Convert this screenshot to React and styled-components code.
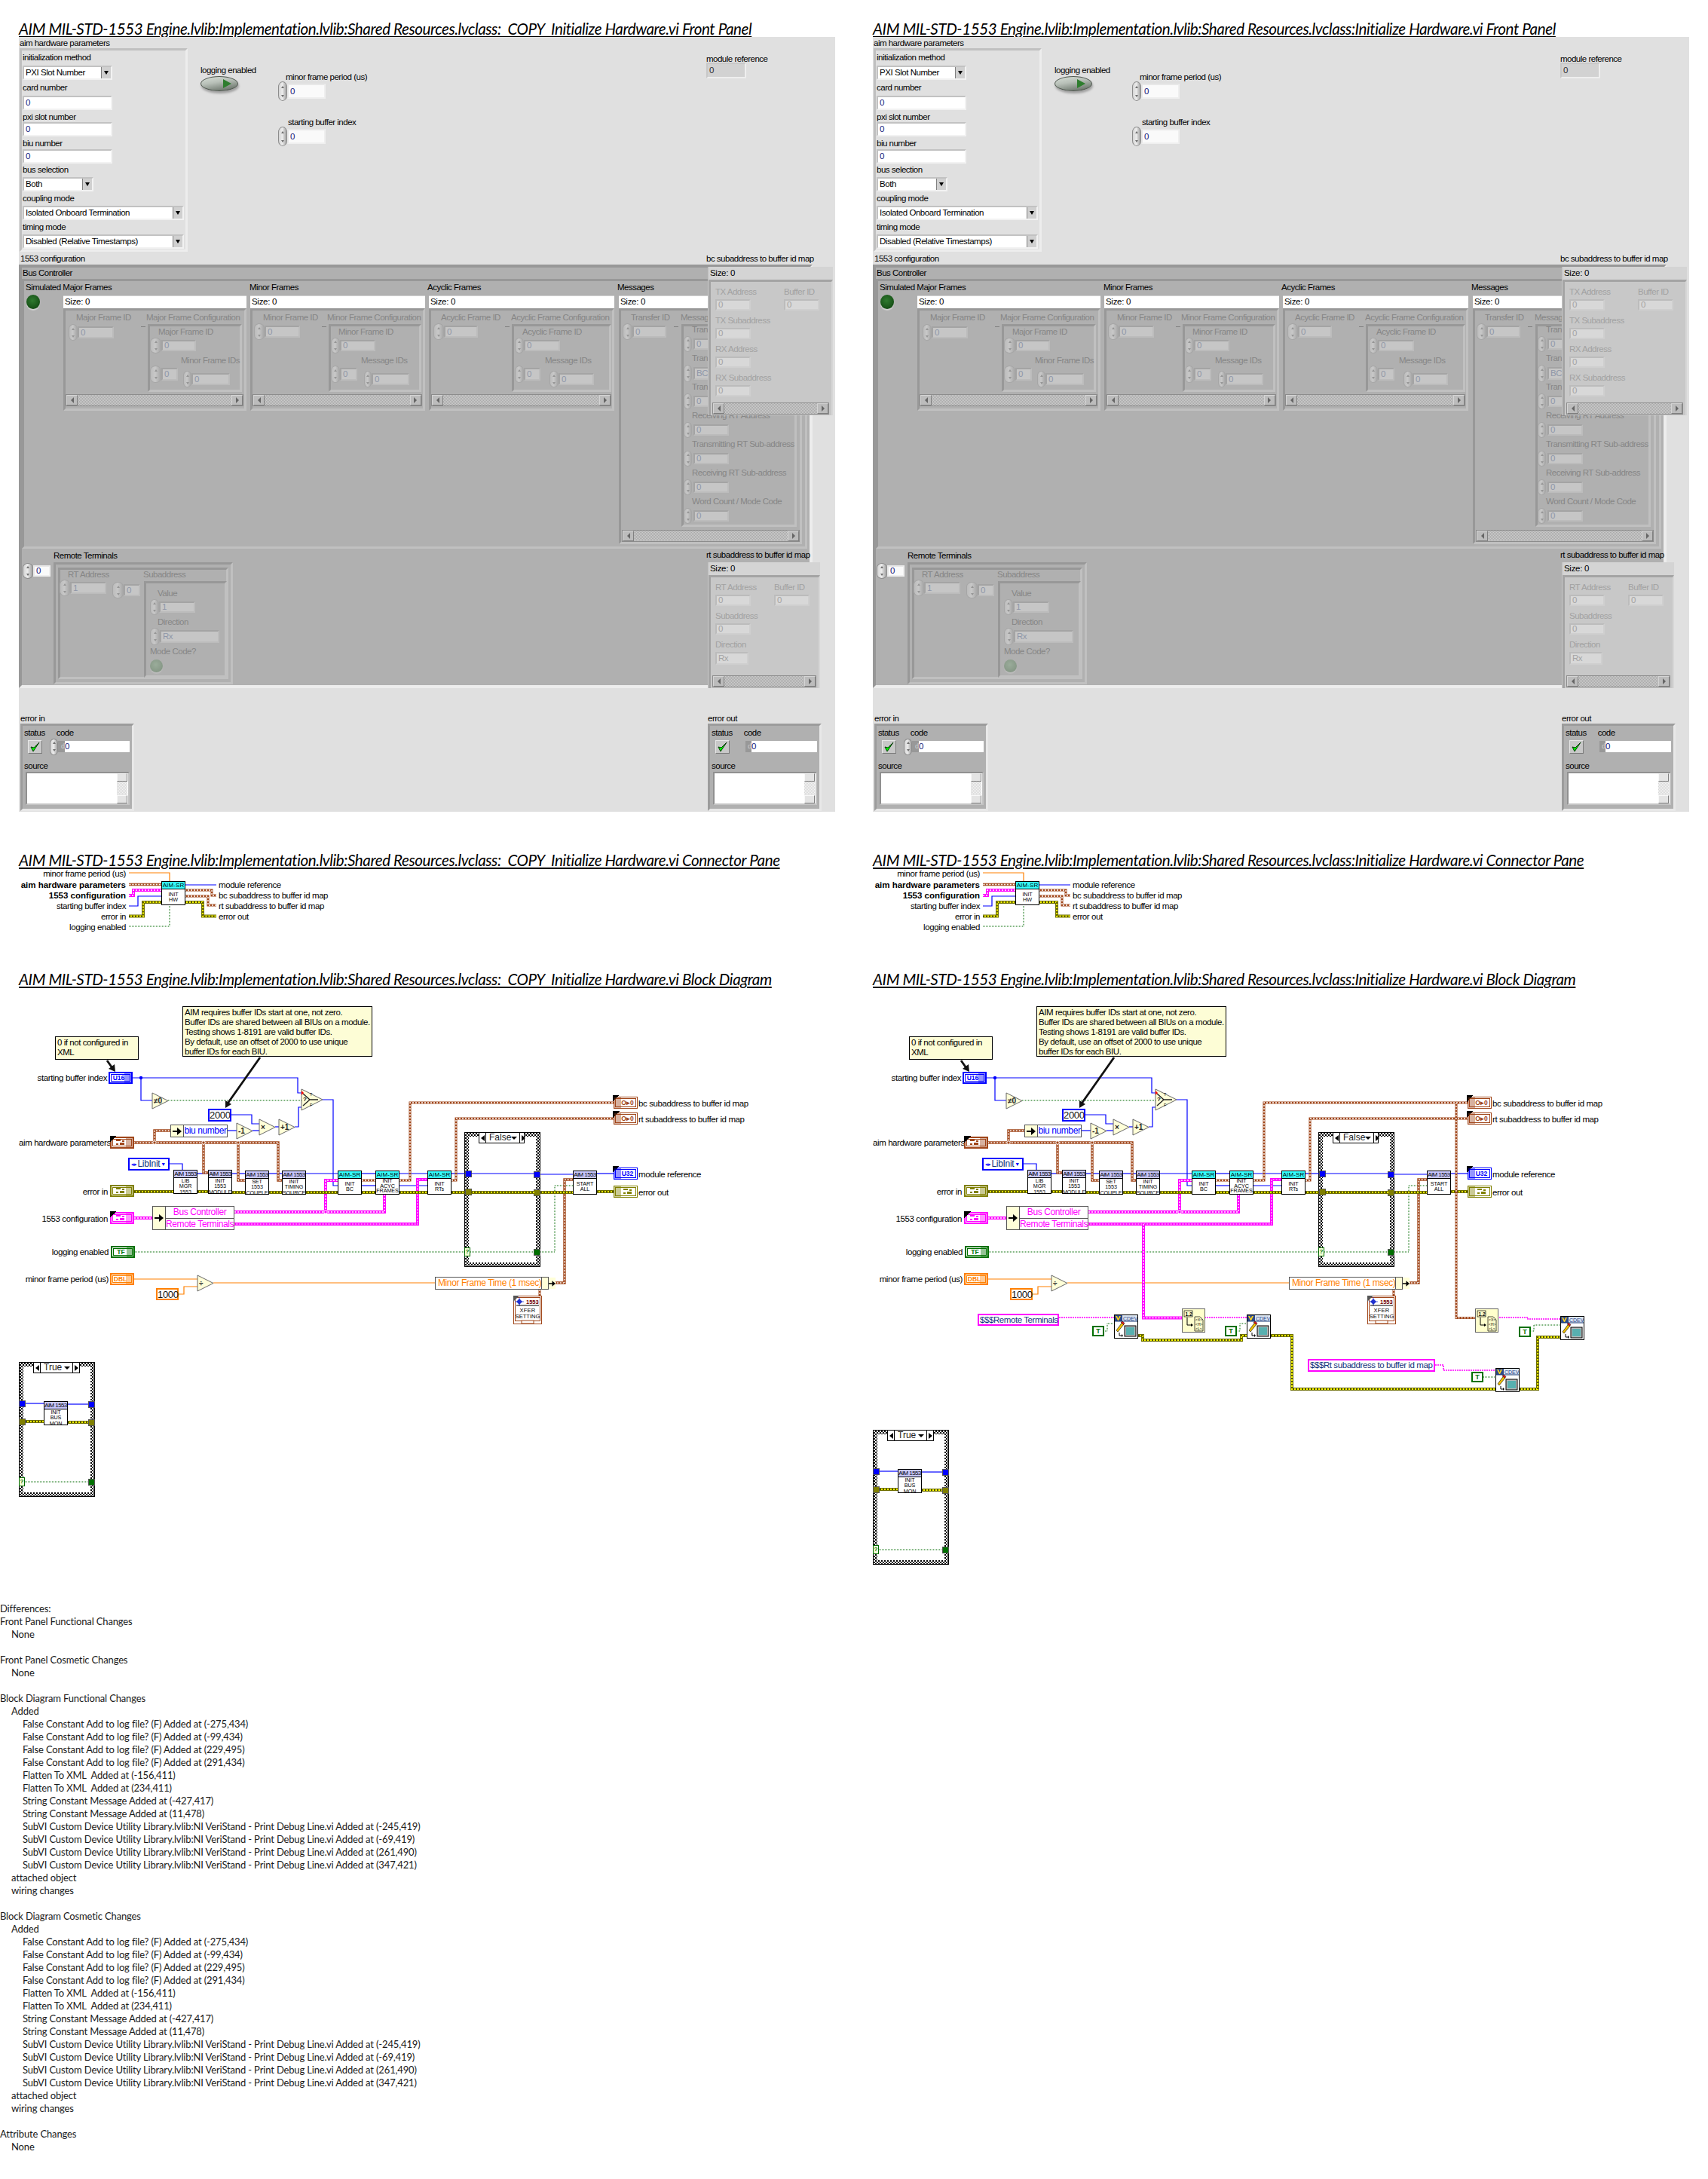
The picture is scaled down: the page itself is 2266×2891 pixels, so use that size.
import React from 'react'
import styled, { createGlobalStyle, css } from 'styled-components'

const GlobalStyle = createGlobalStyle`
  html, body { margin: 0; padding: 0; background: #fff; }
  body { font-family: 'Liberation Sans', sans-serif; color: #000; }
`

// canvases take page coordinates of the left column, so numbers read off the picture stay usable
const onCanvas = originY => css`
  position: absolute;
  box-sizing: border-box;
  left: ${p => p.$x - 25}px;
  top: ${p => p.$y - originY}px;
  ${p => (p.$w != null ? `width: ${p.$w}px;` : '')}
  ${p => (p.$h != null ? `height: ${p.$h}px;` : '')}
`
const FP = styled.div`${onCanvas(49)}`
const CP = styled.div`${onCanvas(1152)}`
const BD = styled.div`${onCanvas(1310)}`

const Page = styled.div`
  width: 2266px;
  min-height: 2891px;
  overflow: hidden;
`
const Columns = styled.div`
  display: grid;
  grid-template-columns: 1133px 1133px;
`
const Column = styled.section`
  padding-left: 25px;
  display: flex;
  flex-direction: column;
`
const Title = styled.h2`
  margin: ${p => p.$top}px 0 0;
  height: 22px;
  font: italic 400 20.6px/22px Lato, sans-serif;
  letter-spacing: -0.42px;
  text-decoration: underline;
  text-decoration-thickness: 2px;
  text-underline-offset: 2px;
  white-space: pre;
  color: #000;
`

/* ---------- front panel parts ---------- */

const Panel = styled.div`
  position: relative;
  width: 1083px;
  height: 1028px;
  background: #e0e0e0;
  overflow: hidden;
`
const Lbl = styled.div`
  font-size: 11.5px;
  line-height: 12px;
  height: 12px;
  white-space: nowrap;
  letter-spacing: -0.5px;
  color: ${p => (p.$dim ? '#868686' : p.$veil ? '#a2a2a2' : '#000')};
  margin-left: ${p => p.$ml || 0}px;
`
const TONE = {
  live: { bg: '#fff', tl: '#c2c2c2', br: '#f2f2f2', txt: '#13207c' },
  flat: { bg: '#fafafa', tl: '#e8e8e8', br: '#efefef', txt: '#13207c' },
  ind: { bg: '#d2d2d2', tl: '#c8c8c8', br: '#eeeeee', txt: '#333' },
  dim: { bg: '#c6c6c6', tl: '#a4a4a4', br: '#bcbcbc', txt: '#8f96a8' },
  veil: { bg: '#d8d8d8', tl: '#bcbcbc', br: '#cfcfcf', txt: '#a4a4a4' },
}
const Field = styled.div`
  box-sizing: border-box;
  flex: none;
  width: ${p => p.$w}px;
  height: ${p => p.$h}px;
  margin-top: ${p => p.$mt || 0}px;
  padding-left: 2px;
  background: ${p => TONE[p.$tone].bg};
  border: 2px solid;
  border-color: ${p => `${TONE[p.$tone].tl} ${TONE[p.$tone].br} ${TONE[p.$tone].br} ${TONE[p.$tone].tl}`};
  color: ${p => TONE[p.$tone].txt};
  font-size: 11.5px;
  letter-spacing: -0.45px;
  line-height: ${p => p.$h - 4}px;
  white-space: nowrap;
  overflow: hidden;
`
const Spin = styled.div`
  flex: none;
  box-sizing: border-box;
  width: ${p => p.$w}px;
  height: ${p => p.$h}px;
  border-radius: 50% / 28%;
  border: 1px solid ${p => (p.$faint ? '#a6a6a6' : '#8c8c8c')};
  background: ${p =>
    p.$faint ? 'linear-gradient(90deg,#bcbcbc,#c8c8c8 45%,#a8a8a8)' : 'linear-gradient(90deg,#d4d4d4,#ececec 45%,#a2a2a2)'};
  display: flex;
  flex-direction: column;
  align-items: center;
  justify-content: space-around;
  &::before, &::after {
    content: '';
    border-left: 2px solid transparent;
    border-right: 2px solid transparent;
  }
  &::before { border-bottom: 3px solid ${p => (p.$faint ? '#969696' : '#707070')}; }
  &::after { border-top: 3px solid ${p => (p.$faint ? '#969696' : '#707070')}; }
`
const NumRow = styled.div`
  display: flex;
  align-items: center;
`
const Num = ({ x, y, spin = 12, w, h = 16, v = '0', tone = 'dim' }) => (
  <FP $x={x} $y={y - 3}>
    <NumRow>
      {spin ? <Spin $w={spin} $h={h + 6} $faint={tone !== 'live' && tone !== 'flat'} /> : null}
      <Field $w={w} $h={h} $tone={tone}>{v}</Field>
    </NumRow>
  </FP>
)
const FpLabel = ({ x, y, dim, children }) => (
  <FP $x={x} $y={y - 6}><Lbl $dim={dim}>{children}</Lbl></FP>
)

// the recessed frame every LabVIEW cluster or array sits in
const Frame = styled(FP)`
  background: ${p => p.$bg};
  border: ${p => p.$bw || 3}px solid;
  border-color: ${p => `${p.$tl} ${p.$br} ${p.$br} ${p.$tl}`};
`
const ON_DARK = { $bg: '#b0b0b0', $tl: '#989898', $br: '#c0c0c0' }
const ON_LIGHT = { $bg: '#e0e0e0', $tl: '#c0c0c0', $br: '#ededed' }

const AimCluster = styled(Frame)`
  display: flex;
  flex-direction: column;
  padding: 3px 0 0 1px;
`
const AimLabel = styled(Lbl)`
  margin-top: ${p => p.$top}px;
`
const RingBox = styled(Field)`
  position: relative;
  background: #fff;
  color: #000;
`
const RingBtn = styled.span`
  position: absolute;
  top: 0;
  right: 0;
  bottom: 0;
  width: 12px;
  background: #d0d0d0;
  border-left: 1px solid #808080;
  display: flex;
  align-items: center;
  justify-content: center;
  &::after {
    content: '';
    border-left: 3px solid transparent;
    border-right: 3px solid transparent;
    border-top: 5px solid #000;
  }
`
const Ring = ({ w, mt, children }) => (
  <RingBox $w={w} $h={19} $mt={mt} $tone="live">{children}<RingBtn /></RingBox>
)
const AimNumber = ({ label, top, mt }) => (
  <>
    <AimLabel $top={top}>{label}</AimLabel>
    <Field $w={119} $h={19} $mt={mt} $tone="live">0</Field>
  </>
)

const Toggle = styled(FP)`
  border-radius: 50%;
  background: linear-gradient(170deg, #d8e0d8, #b8c0b8 40%, #5c665c);
  box-shadow: 1px 3px 3px #a0a0a0;
  border: 1px solid #505850;
  &::after {
    content: '';
    position: absolute;
    right: 8px;
    top: 3px;
    border-left: 11px solid #2e7d2e;
    border-top: 6px solid transparent;
    border-bottom: 6px solid transparent;
  }
`
const Led = styled(FP)`
  border-radius: 50%;
  background: radial-gradient(circle at 45% 40%, ${p => (p.$faint ? '#9aac9a, #7f907f' : '#2f7a2f, #0c3f0c')});
  box-shadow: 0 2px 1px ${p => (p.$faint ? '#bcbcbc' : '#d0d0d0')};
`
const SizeBar = styled(FP)`
  background: #fff;
  border-top: 1px solid #d0d0d0;
  font-size: 11.5px;
  letter-spacing: -0.3px;
  line-height: 15px;
  padding-left: 2px;
`
const Scroll = styled.div`
  box-sizing: border-box;
  display: flex;
  height: 16px;
  border: 1px solid #8c8c8c;
  background: repeating-conic-gradient(#a8a8a8 0 25%, #cdcdcd 0 50%) 0 0 / 2px 2px;
`
const ScrollBtn = styled.span`
  flex: none;
  width: 13px;
  background: #bcbcbc;
  border: 1px solid #d4d4d4;
  border-right-color: #808080;
  border-bottom-color: #808080;
  display: flex;
  align-items: center;
  justify-content: center;
  margin-left: ${p => (p.$end ? 'auto' : 0)};
  &::after {
    content: '';
    border-top: 4px solid transparent;
    border-bottom: 4px solid transparent;
    ${p => (p.$end ? 'border-left: 4px solid #666;' : 'border-right: 4px solid #666;')}
  }
`
const HScroll = () => (
  <Scroll>
    <ScrollBtn />
    <ScrollBtn $end />
  </Scroll>
)
const Tick = styled(FP)`
  width: 6px;
  height: 1px;
  background: #808080;
`

const ARRAYS = [
  {
    title: 'Simulated Major Frames', size: [84, 243], id: ['Major Frame ID', 101], cfg: ['Major Frame Configuration', 194],
    spin: 91, field: [103, 48], fy: 433, sub: [196, 125], inner: ['Major Frame ID', 210], in: [199, 214, 46],
    list: ['Minor Frame IDs', 240], idx: 22, el: [243, 254, 51],
  },
  {
    title: 'Minor Frames', size: [332, 231.5], id: ['Minor Frame ID', 349], cfg: ['Minor Frame Configuration', 434],
    spin: 337, field: [351, 47], fy: 432, sub: [436, 123], inner: ['Minor Frame ID', 449], in: [439, 451, 47],
    list: ['Message IDs', 479], idx: 23, el: [483, 493, 50],
  },
  {
    title: 'Acyclic Frames', size: [569, 246], id: ['Acyclic Frame ID', 585], cfg: ['Acyclic Frame Configuration', 678],
    spin: 575, field: [589, 45], fy: 432, sub: [679, 132], inner: ['Acyclic Frame ID', 693], in: [683, 695, 48],
    list: ['Message IDs', 723], idx: 22, el: [729, 741, 47],
  },
]

const FrameArray = ({ a }) => {
  const [sx, sw] = a.size
  return (
    <>
      <SizeBar $x={sx} $y={392} $w={sw} $h={17}>Size: 0</SizeBar>
      <Frame {...ON_DARK} $x={sx} $y={409} $w={sw} $h={136} />
      <FpLabel x={a.id[1]} y={421} dim>{a.id[0]}</FpLabel>
      <FpLabel x={a.cfg[1]} y={421} dim>{a.cfg[0]}</FpLabel>
      <Num x={a.spin} y={a.fy} spin={a.field[0] - a.spin} w={a.field[1]} />
      <Tick $x={a.sub[0] - 9} $y={433} />
      <Frame {...ON_DARK} $x={a.sub[0]} $y={430} $w={a.sub[1]} $h={90} />
      <FpLabel x={a.inner[1]} y={440} dim>{a.inner[0]}</FpLabel>
      <Num x={a.in[0]} y={451} spin={a.in[1] - a.in[0]} w={a.in[2]} h={15} />
      <FpLabel x={a.list[1]} y={478} dim>{a.list[0]}</FpLabel>
      <Num x={a.in[0]} y={488} spin={a.in[1] - a.in[0]} w={a.idx} h={17} />
      <Num x={a.el[0]} y={495} spin={a.el[1] - a.el[0]} w={a.el[2]} />
      <FP $x={sx + 3} $y={523} $w={sw - 7}><HScroll /></FP>
    </>
  )
}

// the upper labels of this array only show as far as the map lying over them
const MSG_ITEMS = [
  ['Trans', '0', 15],
  ['Trans', 'BC t', 17],
  ['Trans', '0', 15],
  ['Receiving RT Address', '0', 15],
  ['Transmitting RT Sub-address', '0', 15],
  ['Receiving RT Sub-address', '0', 15],
  ['Word Count / Mode Code', '0', 15],
]
const MsgStack = styled(FP)`
  display: flex;
  flex-direction: column;
`
const MsgItem = styled.div`
  height: 38px;
`
const MsgRow = styled(NumRow)`
  margin-top: 3px;
  gap: 2px;
`
const MessagesArray = () => (
  <>
    <SizeBar $x={821} $y={392} $w={240} $h={17}>Size: 0</SizeBar>
    <Frame {...ON_DARK} $x={821} $y={409} $w={243} $h={313} />
    <FpLabel x={837} y={421} dim>Transfer ID</FpLabel>
    <FpLabel x={903} y={421} dim>Messag</FpLabel>
    <Num x={826} y={432} spin={13} w={45} />
    <Tick $x={894} $y={433} />
    <Frame {...ON_DARK} $x={904} $y={430} $w={153} $h={269} />
    <MsgStack $x={907} $y={431}>
      {MSG_ITEMS.map(([label, v, h], i) => (
        <MsgItem key={i}>
          <Lbl $dim $ml={11}>{label}</Lbl>
          <MsgRow>
            <Spin $w={11} $h={h + 6} $faint />
            <Field $w={47} $h={h} $tone="dim">{v}</Field>
          </MsgRow>
        </MsgItem>
      ))}
    </MsgStack>
    <FP $x={825} $y={703} $w={236}><HScroll /></FP>
  </>
)

const Overlay = styled(FP)`
  display: flex;
  flex-direction: column;
  background: #c8c8c8;
`
const OverlaySize = styled.div`
  flex: none;
  height: 17px;
  margin-left: 2px;
  background: #d4d4d4;
  font-size: 11.5px;
  letter-spacing: -0.3px;
  line-height: 16px;
  padding-left: 1px;
`
const OverlayFrame = styled.div`
  flex: 1;
  min-height: 0;
  display: flex;
  flex-direction: column;
  margin-left: 1px;
  padding: 0 3px 1px 2px;
  border-top: 3px solid #a4a4a4;
  border-left: 3px solid #a4a4a4;
  border-right: 2px solid #d6d6d6;
`
const OverlayCols = styled.div`
  flex: 1;
  display: flex;
  padding-top: 7px;
`
const OverlayCol = styled.div`
  width: ${p => p.$w}px;
  flex: none;
`
const VeilItem = styled.div`
  height: 38px;
`
const VeilField = ({ label, v = '0', w = 47, h = 15 }) => (
  <VeilItem>
    <Lbl $veil>{label}</Lbl>
    <Field $w={w} $h={h} $mt={4} $tone="veil">{v}</Field>
  </VeilItem>
)
const VeilIndent = styled.div`
  padding-left: 4px;
`

const ErrorBox = styled(Frame)`
  padding: 3px 3px 0 1px;
  display: flex;
  flex-direction: column;
`
const ErrHead = styled.div`
  display: flex;
  height: 14px;
`
const ErrRow = styled.div`
  display: flex;
  align-items: center;
  height: 21px;
  margin-bottom: 9px;
`
const CheckBtn = styled.div`
  width: 19px;
  height: 18px;
  margin-left: 6px;
  box-sizing: border-box;
  background: #c8c8c8;
  border: 1px solid #e8e8e8;
  border-right-color: #7c7c7c;
  border-bottom-color: #7c7c7c;
  display: flex;
  align-items: center;
  justify-content: center;
`
const SpinGap = styled.div`
  margin-left: 10px;
`
const CodeTagGap = styled.div`
  width: 21px;
`
const CodeTag = styled.div`
  width: ${p => p.$w}px;
  height: 15px;
  background: #989898;
  color: #d0d0d0;
  font-size: 9px;
  line-height: 15px;
  text-align: right;
`
const CodeField = styled.div`
  flex: 1;
  height: 15px;
  background: #fff;
  color: #13207c;
  font-size: 11.5px;
  line-height: 15px;
`
const SourceBox = styled.div`
  flex: 1;
  margin: 2px 0 5px 3px;
  background: #fff;
  border: 2px solid;
  border-color: #909090 #c4c4c4 #c4c4c4 #909090;
  display: flex;
  justify-content: flex-end;
`
const VScroll = styled.div`
  width: 14px;
  margin-right: 1px;
  display: flex;
  flex-direction: column;
  justify-content: space-between;
  background: repeating-conic-gradient(#d8d8d8 0 25%, #f4f4f4 0 50%) 0 0 / 2px 2px;
`
const VBtn = styled.span`
  height: 9px;
  background: #e4e4e4;
  border: 1px solid #f8f8f8;
  border-right-color: #808080;
  border-bottom-color: #808080;
`
const ErrorCluster = ({ x, title, out }) => (
  <>
    <FpLabel x={x} y={953}>{title}</FpLabel>
    <ErrorBox {...ON_DARK} $tl="#9c9c9c" $br="#e8e8e8" $x={x} $y={960} $w={151} $h={116}>
      <ErrHead>
        <Lbl $ml={1}>status</Lbl>
        <Lbl $ml={15}>code</Lbl>
      </ErrHead>
      <ErrRow>
        <CheckBtn>
          <svg width="13" height="14" viewBox="0 0 13 14"><path d="M1 7l3 6 8-12-7 7z" fill="#00ff00" stroke="#003800" strokeWidth="1" /></svg>
        </CheckBtn>
        {out ? <CodeTagGap /> : <SpinGap><Spin $w={11} $h={22} /></SpinGap>}
        <CodeTag $w={out ? 8 : 9}>d</CodeTag>
        <CodeField>0</CodeField>
      </ErrRow>
      <Lbl $ml={1}>source</Lbl>
      <SourceBox>
        <VScroll><VBtn /><VBtn /></VScroll>
      </SourceBox>
    </ErrorBox>
  </>
)

const FrontPanel = () => (
  <Panel>
    <FpLabel x={26} y={57}>aim hardware parameters</FpLabel>
    <AimCluster {...ON_LIGHT} $x={26} $y={64} $w={223} $h={270}>
      <Lbl>initialization method</Lbl>
      <Ring w={119} mt={5}>PXI Slot Number</Ring>
      <AimNumber label="card number" top={4} mt={5} />
      <AimNumber label="pxi slot number" top={3} mt={1} />
      <AimNumber label="biu number" top={3} mt={2} />
      <AimLabel $top={2}>bus selection</AimLabel>
      <Ring w={94} mt={4}>Both</Ring>
      <AimLabel $top={3}>coupling mode</AimLabel>
      <Ring w={214} mt={4}>Isolated Onboard Termination</Ring>
      <AimLabel $top={3}>timing mode</AimLabel>
      <Ring w={214} mt={4}>Disabled (Relative Timestamps)</Ring>
    </AimCluster>

    <FpLabel x={266} y={93}>logging enabled</FpLabel>
    <Toggle $x={266} $y={101} $w={50} $h={20} />
    <FpLabel x={379} y={102}>minor frame period (us)</FpLabel>
    <Num x={369} y={111} w={51} h={20} tone="flat" />
    <FpLabel x={382} y={162}>starting buffer index</FpLabel>
    <Num x={369} y={171} w={51} h={20} tone="flat" />
    <FpLabel x={937} y={78}>module reference</FpLabel>
    <Num x={937} y={86} spin={0} w={53} h={21} tone="ind" />

    <FpLabel x={27} y={343}>1553 configuration</FpLabel>
    <Frame {...ON_DARK} $br="#ededed" $bw={4} $x={25} $y={351} $w={1053} $h={562} />
    <FpLabel x={30} y={362}>Bus Controller</FpLabel>
    <Frame {...ON_DARK} $x={29} $y={370} $w={1042} $h={358} />
    <FpLabel x={34} y={381}>Simulated Major Frames</FpLabel>
    <FpLabel x={331} y={381}>Minor Frames</FpLabel>
    <FpLabel x={567} y={381}>Acyclic Frames</FpLabel>
    <FpLabel x={819} y={381}>Messages</FpLabel>
    <Led $x={35} $y={391} $w={18} $h={19} />
    {ARRAYS.map(a => <FrameArray key={a.title} a={a} />)}
    <MessagesArray />

    <FpLabel x={71} y={737}>Remote Terminals</FpLabel>
    <Num x={30} y={750} spin={14} w={23} h={15} tone="flat" />
    <Frame {...ON_DARK} $x={71} $y={746} $w={238} $h={162} />
    <Frame {...ON_DARK} $x={77} $y={753} $w={226} $h={148} />
    <FpLabel x={90} y={762} dim>RT Address</FpLabel>
    <FpLabel x={190} y={762} dim>Subaddress</FpLabel>
    <Num x={79} y={772} spin={14} w={48} v="1" />
    <Num x={149} y={775} spin={15} w={22} />
    <Frame {...ON_DARK} $x={191} $y={771} $w={110} $h={128} />
    <FpLabel x={209} y={787} dim>Value</FpLabel>
    <Num x={199} y={798} w={48} spin={12} h={15} v="1" />
    <FpLabel x={209} y={825} dim>Direction</FpLabel>
    <Num x={199} y={836} w={79} spin={13} h={17} v="Rx" />
    <FpLabel x={199} y={864} dim>Mode Code?</FpLabel>
    <Led $faint $x={199} $y={875} $w={17} $h={17} />

    <FpLabel x={937} y={343}>bc subaddress to buffer id map</FpLabel>
    <Overlay $x={939} $y={354} $w={166} $h={197}>
      <OverlaySize>Size: 0</OverlaySize>
      <OverlayFrame>
        <OverlayCols>
          <OverlayCol $w={95}>
            <VeilIndent>
              <VeilField label="TX Address" />
              <VeilField label="TX Subaddress" />
              <VeilField label="RX Address" />
              <VeilField label="RX Subaddress" />
            </VeilIndent>
          </OverlayCol>
          <OverlayCol $w={60}>
            <VeilField label="Buffer ID" />
          </OverlayCol>
        </OverlayCols>
        <HScroll />
      </OverlayFrame>
    </Overlay>

    <FpLabel x={937} y={736}>rt subaddress to buffer id map</FpLabel>
    <Overlay $x={939} $y={746} $w={149} $h={167}>
      <OverlaySize>Size: 0</OverlaySize>
      <OverlayFrame>
        <OverlayCols>
          <OverlayCol $w={82}>
            <VeilIndent>
              <VeilField label="RT Address" />
              <VeilField label="Subaddress" />
              <VeilField label="Direction" w={44} h={17} v="Rx" />
            </VeilIndent>
          </OverlayCol>
          <OverlayCol $w={52}>
            <VeilField label="Buffer ID" />
          </OverlayCol>
        </OverlayCols>
        <HScroll />
      </OverlayFrame>
    </Overlay>

    <ErrorCluster x={27} title="error in" />
    <ErrorCluster x={939} title="error out" out />
  </Panel>
)

/* ---------- diagram parts ---------- */

const Wires = styled.svg`
  position: absolute;
  left: 0;
  top: 0;
  overflow: visible;
  pointer-events: none;
`
const WIRE = {
  blue: [{ c: '#0000ff', w: 1.2 }],
  orange: [{ c: '#ff8000', w: 1.2 }],
  bool: [{ c: '#006a00', w: 1, dash: '1 1' }],
  error: [{ c: '#6f6f00', w: 4 }, { c: '#ffff00', w: 2 }, { c: '#1c1c00', w: 1.4, dash: '2 2' }],
  cluster: [{ c: '#a0461a', w: 3.4 }, { c: '#fff', w: 1.4, dash: '1 1' }],
  pink: [{ c: '#ff00ff', w: 4 }, { c: '#fff', w: 1.4, dash: '2 2' }],
  pinkFine: [{ c: '#ff00ff', w: 4 }, { c: '#fff', w: 1.2, dash: '1 1' }],
  pinkThin: [{ c: '#ff00ff', w: 1.6, dash: '2 1' }],
  meander: [{ c: '#a0461a', w: 3 }, { c: '#fff', w: 1.3, dash: '2 2' }],
}
const Wire = ({ d, kind }) => (
  <g fill="none">
    {WIRE[kind].map((s, i) => (
      <path key={i} d={d} stroke={s.c} strokeWidth={s.w} strokeDasharray={s.dash} />
    ))}
  </g>
)
const wireSet = (kind, list) => list.map(d => <Wire key={kind + d} d={d} kind={kind} />)
const Dot = ({ x, y, c }) => <circle cx={x} cy={y} r="2.2" fill={c} stroke={c === '#0000ff' ? c : '#fff'} strokeWidth={c === '#0000ff' ? 0 : 1} />

const Prim = ({ x, y, w = 21, h = 21, children, size = 10 }) => (
  <g>
    <polygon points={`${x},${y} ${x + w},${y + h / 2} ${x},${y + h}`} fill="#ffffd8" stroke="#666" />
    <text x={x + 2} y={y + h / 2 + size * 0.36} fontFamily="Liberation Sans" fontWeight="700" fontSize={size} fill="#222">{children}</text>
  </g>
)

const DgLabel = styled(BD)`
  font-size: 11.5px;
  line-height: 12px;
  white-space: nowrap;
  letter-spacing: -0.4px;
  ${p => (p.$right ? 'text-align: right;' : '')}
`
const RightLabel = ({ end, y, children }) => (
  <DgLabel $x={25} $w={end - 25} $y={y - 6} $right>{children}</DgLabel>
)

const Note = styled(BD)`
  background: #fdfdd6;
  border: 1px solid #000;
  font-size: 11.5px;
  letter-spacing: -0.44px;
  line-height: 13px;
  padding: 1px 0 0 2px;
  white-space: pre;
`

const TermBox = styled(BD)`
  width: 32px;
  height: 16px;
  background: #fff;
  border: ${p => (p.$thin ? 1 : 2)}px solid ${p => p.$c};
  padding: 1px;
  display: flex;
  ${p => p.$corner && css`
    &::before {
      content: '';
      position: absolute;
      left: -2px;
      top: -3px;
      width: 9px;
      height: 9px;
      background: linear-gradient(135deg, #000 50%, transparent 50%);
    }
  `}
`
const TermInner = styled.div`
  flex: 1;
  border: 1px solid ${p => p.$c};
  color: ${p => p.$c};
  font-size: 8.5px;
  font-weight: 700;
  line-height: 9px;
  text-align: center;
  display: flex;
  align-items: center;
  justify-content: center;
  padding-${p => (p.$out ? 'left' : 'right')}: 5px;
`
const TermTint = styled.span`
  position: absolute;
  top: 0;
  bottom: 0;
  ${p => (p.$out ? 'left: 0' : 'right: 0')};
  width: 9px;
  background: ${p => p.$c};
  opacity: 0.42;
`
const ClusterGlyph = ({ c }) => (
  <svg width="14" height="8" viewBox="0 0 14 8">
    <rect x="1" y="0" width="6" height="2" fill={c} />
    <rect x="9" y="1" width="3" height="2" fill={c} />
    <rect x="1" y="5" width="3" height="2" fill={c} />
    <rect x="6" y="4" width="6" height="3" fill={c} />
  </svg>
)
const Terminal = ({ x, y, c, text, glyph, corner, out, thin }) => (
  <TermBox $x={x} $y={y} $c={c} $corner={corner} $thin={thin}>
    <TermInner $c={c} $out={out}>{glyph ? <ClusterGlyph c={c} /> : text}</TermInner>
    <TermTint $c={c} $out={out} />
  </TermBox>
)

const NodeBox = styled(BD)`
  width: ${p => p.$w || 32}px;
  height: 32px;
  background: #fff;
  border: 1px solid #000;
  display: flex;
  flex-direction: column;
`
const NodeHead = styled.div`
  flex: none;
  height: 9px;
  background: ${p => (p.$sr ? '#33ffff' : '#c8c8ff')};
  border-bottom: 1px solid #000;
  font-size: 8px;
  line-height: 9px;
  text-align: center;
  white-space: nowrap;
  letter-spacing: ${p => (p.$sr ? 0.1 : -0.6)}px;
`
const NodeBody = styled.div`
  flex: 1;
  display: flex;
  flex-direction: column;
  align-items: center;
  justify-content: center;
  font-size: 7.2px;
  line-height: ${p => (p.$tight ? 6.4 : 7.4)}px;
  letter-spacing: -0.1px;
  white-space: nowrap;
`
const SubVI = ({ x, y, sr, lines, w, tight }) => (
  <NodeBox $x={x} $y={y} $w={w}>
    <NodeHead $sr={sr}>{sr ? 'AIM-SR' : 'AIM 1553'}</NodeHead>
    <NodeBody $tight={tight}>{lines.map(l => <span key={l}>{l}</span>)}</NodeBody>
  </NodeBox>
)

const Constant = styled(BD)`
  border: 2px solid ${p => p.$c};
  background: #fff;
  font-size: 13px;
  letter-spacing: -0.3px;
  text-align: center;
  line-height: 13px;
  white-space: nowrap;
  color: ${p => p.$text || '#111'};
`
const TextConstant = styled(Constant)`
  text-align: left;
  font-size: 11.5px;
  letter-spacing: -0.42px;
  padding-left: 1px;
  line-height: 12px;
  color: #12327c;
`
const BoolConst = styled(BD)`
  width: 16px;
  height: 14px;
  background: #007000;
  padding: 2px;
  display: flex;
  &::after {
    content: 'T';
    flex: 1;
    background: #fff;
    color: #007000;
    font: 700 9px/10px 'Liberation Sans', sans-serif;
    text-align: center;
  }
`
const LibRing = styled(BD)`
  border: 2px solid #0000ff;
  background: #fff;
  font-size: 12px;
  letter-spacing: -0.3px;
  line-height: 13px;
  display: flex;
  align-items: center;
  justify-content: space-between;
  padding: 0 3px 0 2px;
  color: #12327c;
`
const Blue = styled.span`
  color: #0000ff;
  font-size: 7px;
`

const BlockArrow = () => (
  <svg width="12" height="10" viewBox="0 0 12 10">
    <path d="M0 4h6V0l6 5-6 5V6H0z" fill="#000" />
  </svg>
)
const Unbundle = styled(BD)`
  display: flex;
  border: 1px solid #555;
  background: #fff;
`
const UnbundleGrip = styled.div`
  flex: none;
  width: ${p => p.$w}px;
  background: #ffffd8;
  border-right: 1px solid #555;
  display: flex;
  align-items: center;
  justify-content: center;
`
const UnbundleRows = styled.div`
  flex: 1;
  display: flex;
  flex-direction: column;
`
const UnbundleRow = styled.div`
  flex: 1;
  color: ${p => p.$c};
  font-size: 12px;
  letter-spacing: -0.4px;
  line-height: 15px;
  text-align: center;
  white-space: nowrap;
  & + & { border-top: 1px solid #555; }
`
const BundleCell = styled.div`
  flex: none;
  width: ${p => p.$w}px;
  background: #ffffd8;
  border-left: 1px solid #555;
  display: flex;
  align-items: center;
  justify-content: center;
`
const BundleText = styled.div`
  flex: 1;
  color: #ff8000;
  font-size: 12px;
  letter-spacing: -0.4px;
  line-height: 15px;
  padding-left: 3px;
  white-space: nowrap;
`

const CaseFrame = styled(BD)`
  border: 1px solid #000;
  padding: 5px;
  background: repeating-conic-gradient(#000 0 25%, #fff 0 50%) 0 0 / 4px 4px;
`
const CaseInner = styled.div`
  height: 100%;
  background: #fff;
`
const CaseSelector = styled(BD)`
  display: flex;
  height: 15px;
  border: 1px solid #000;
  background: #fff;
  font-size: 12px;
  line-height: 13px;
`
const CaseStep = styled.span`
  flex: none;
  width: 8px;
  display: flex;
  align-items: center;
  justify-content: center;
  ${p => (p.$end ? 'border-left' : 'border-right')}: 1px solid #000;
  &::after {
    content: '';
    border-top: 4px solid transparent;
    border-bottom: 4px solid transparent;
    ${p => (p.$end ? 'border-left: 5px solid #000;' : 'border-right: 5px solid #000;')}
  }
`
const CaseName = styled.span`
  flex: 1;
  padding: 0 3px 0 4px;
  display: flex;
  justify-content: space-between;
  align-items: center;
  color: #222;
  &::after {
    content: '';
    border-left: 4px solid transparent;
    border-right: 4px solid transparent;
    border-top: 4px solid #000;
  }
`
const Tunnel = styled(BD)`
  width: 9px;
  height: 9px;
  background: ${p => p.$c};
  border: 1px solid #555;
`
const CaseQuestion = styled(BD)`
  width: 8px;
  height: 12px;
  background: #f4ffd8;
  border: 1px solid #006a00;
  color: #006a00;
  font: 700 8px/10px 'Liberation Sans', sans-serif;
  text-align: center;
`
const CaseStructure = ({ x, y, w, h, name, selX, selW, tunnels, qy }) => (
  <>
    <CaseFrame $x={x} $y={y} $w={w} $h={h}><CaseInner /></CaseFrame>
    <CaseSelector $x={selX} $y={y} $w={selW}>
      <CaseStep />
      <CaseName>{name}</CaseName>
      <CaseStep $end />
    </CaseSelector>
    {tunnels.map(([tx, ty, c]) => <Tunnel key={`${tx}-${ty}`} $x={tx} $y={ty} $c={c} />)}
    <CaseQuestion $x={x} $y={qy}>?</CaseQuestion>
  </>
)

const IconHolder = styled(BD)`
  line-height: 0;
`
const DebugIcon = ({ x, y }) => (
  <IconHolder $x={x} $y={y}>
    <svg width="32" height="32" viewBox="0 0 32 32">
      <rect x=".5" y=".5" width="31" height="31" fill="#fff" stroke="#000" />
      <rect x="1" y="1" width="30" height="8" fill="#dce6f2" />
      <rect x="1" y="1" width="10" height="8" fill="#2d4a8c" />
      <path d="M2 2l3 6h1l3-6H7L5.500 5.500 4 2z" fill="#ffd21e" />
      <path d="M1 9h30" stroke="#1c3c78" />
      <text x="12" y="7.800" fontFamily="Liberation Sans" fontSize="7" fill="#1c3c88">CDEV</text>
      <path d="M3 21l2 2 8-10-2.500-2z" fill="#f2c200" stroke="#000" strokeWidth=".6" />
      <path d="M9 10.500l2-1.500 3 2.500-1.500 2z" fill="#e01818" stroke="#000" strokeWidth=".5" />
      <rect x="14" y="15" width="15" height="14" fill="#b8b8b8" stroke="#000" />
      <rect x="16" y="17" width="11" height="10" fill="#58b0b0" />
      <path d="M7 24v4h4" fill="none" stroke="#000" />
      <path d="M10 26l2 2-2 2z" />
    </svg>
  </IconHolder>
)
const FlattenIcon = ({ x, y }) => (
  <IconHolder $x={x} $y={y}>
    <svg width="31" height="32" viewBox="0 0 31 32">
      <rect x=".5" y=".5" width="30" height="31" fill="#ffffcc" stroke="#666" />
      <rect x="3" y="3" width="11" height="8" fill="#ffffcc" stroke="#000" strokeWidth=".7" />
      <text x="4.500" y="9.500" fontFamily="Liberation Sans" fontSize="6.500" fontWeight="700">1.2</text>
      <path d="M7 12v10h6" fill="none" stroke="#000" />
      <path d="M12 20l3 2-3 2z" />
      <path d="M17 11h7l4 4v15H17z" fill="#ffffcc" stroke="#000" strokeWidth=".7" />
      <text x="18" y="17" fontFamily="Liberation Sans" fontSize="5">&lt;X&gt;</text>
      <text x="18" y="23" fontFamily="Liberation Sans" fontSize="5">&lt;H&gt;</text>
      <text x="18" y="29" fontFamily="Liberation Sans" fontSize="5">&lt;L&gt;</text>
    </svg>
  </IconHolder>
)
const XferIcon = ({ x, y }) => (
  <IconHolder $x={x} $y={y}>
    <svg width="38" height="38" viewBox="0 0 38 38">
      <rect x=".5" y=".5" width="37" height="37" fill="#fff" stroke="#a0461a" />
      <rect x="2.500" y="2.500" width="33" height="31" fill="none" stroke="#a0461a" />
      <path d="M0 0h8L0 8z" fill="#555" />
      <path d="M8 4l4 4-4 4-4-4z" fill="#2030d0" />
      <path d="M8 2v12M2 8h12" stroke="#2030d0" strokeWidth=".7" />
      <text x="17" y="11" fontFamily="Liberation Sans" fontSize="7.500" fontWeight="700" fill="#700000">1553</text>
      <path d="M4 13h30" stroke="#000" />
      <text x="19" y="22" textAnchor="middle" fontFamily="Liberation Sans" fontSize="7.500" letterSpacing=".2">XFER</text>
      <text x="19" y="30" textAnchor="middle" fontFamily="Liberation Sans" fontSize="7.500">SETTING</text>
      <rect x="11" y="33" width="16" height="4" fill="#fff" stroke="#a0461a" />
    </svg>
  </IconHolder>
)

const Canvas = styled.div`
  position: relative;
  width: 1133px;
  height: ${p => p.$h}px;
`

const ConnectorLabel = styled(CP)`
  font-size: 11.5px;
  line-height: 12px;
  text-align: right;
  white-space: nowrap;
  font-weight: ${p => (p.$bold ? 700 : 400)};
  letter-spacing: ${p => (p.$bold ? 0 : -0.42)}px;
`
const ConnectorOut = styled(CP)`
  font-size: 11.5px;
  line-height: 12px;
  letter-spacing: -0.42px;
  white-space: nowrap;
`
const ConnectorIcon = styled(CP)`
  width: 32px;
  height: 32px;
  background: #fff;
  border: 1px solid #000;
  display: flex;
  flex-direction: column;
`
const ConnectorPane = () => (
  <Canvas $h={136}>
    <Wires width="1133" height="136" viewBox="25 1152 1133 136">
      {wireSet('orange', ['M171 1158H225V1169'])}
      {wireSet('cluster', ['M171 1173.500H214'])}
      {wireSet('pink', ['M171 1188H177V1181H214'])}
      {wireSet('blue', ['M171 1202H183V1189H214', 'M245 1174H287'])}
      {wireSet('error', ['M171 1215.500H190V1197H214', 'M245 1197H269V1215.500H287'])}
      {wireSet('bool', ['M171 1229H225V1200'])}
      {wireSet('meander', ['M245 1181H281V1188H287', 'M245 1189H276V1201H287'])}
    </Wires>
    {[
      ['minor frame period (us)', 1159],
      ['aim hardware parameters', 1174, true],
      ['1553 configuration', 1188, true],
      ['starting buffer index', 1202],
      ['error in', 1216],
      ['logging enabled', 1230],
    ].map(([t, y, bold]) => (
      <ConnectorLabel key={t} $x={25} $w={142} $y={y - 6} $bold={bold}>{t}</ConnectorLabel>
    ))}
    {[
      ['module reference', 1174],
      ['bc subaddress to buffer id map', 1188],
      ['rt subaddress to buffer id map', 1202],
      ['error out', 1216],
    ].map(([t, y]) => (
      <ConnectorOut key={t} $x={290} $y={y - 6}>{t}</ConnectorOut>
    ))}
    <ConnectorIcon $x={214} $y={1169}>
      <NodeHead $sr>AIM-SR</NodeHead>
      <NodeBody><span>INIT</span><span>HW</span></NodeBody>
    </ConnectorIcon>
  </Canvas>
)

const BlockDiagram = ({ debug, trueShift }) => {
  const s = trueShift
  return (
    <Canvas $h={815}>
      <CaseStructure
        x={616} y={1502} w={101} h={179} name="False" selX={635} selW={61} qy={1655}
        tunnels={[[617, 1553, '#0000ff'], [708, 1554, '#0000ff'], [617, 1577, '#808000'], [708, 1578, '#808000'], [708, 1657, '#007000']]}
      />
      <CaseStructure
        x={25} y={1807 + s} w={101} h={179} name="True" selX={44} selW={62} qy={1960 + s}
        tunnels={[[25, 1858 + s, '#0000ff'], [117, 1859 + s, '#0000ff'], [25, 1882 + s, '#808000'], [117, 1883 + s, '#808000'], [117, 1962 + s, '#007000']]}
      />

      <Wires width="1133" height="815" viewBox="25 1310 1133 815">
        {wireSet('blue', [
          'M176 1430H395V1450H400', 'M187 1430V1460H202', 'M428 1459H442V1573H448', 'M307 1479H334V1491H344',
          'M365 1495H370', 'M391 1495H396V1469H400', 'M302 1500H314', 'M335 1500H344', 'M225 1544H242V1553',
          'M262 1557H276', 'M308 1557H325', 'M357 1557H374', 'M406 1557H448', 'M480 1557H498', 'M530 1557H567',
          'M599 1557H617', 'M625 1557H709', 'M717 1558H760', 'M792 1557H814', 'M480 1573H498', 'M530 1573H567',
          `M34 ${1862 + s}H58`, `M90 ${1863 + s}H117`,
        ])}
        {wireSet('bool', [
          'M223 1460H400', 'M179 1661H616', 'M624 1661H709', 'M717 1661H736V1573H760', `M33 ${1966 + s}H117`,
        ])}
        {wireSet('orange', ['M178 1697H262', 'M237 1717H244V1707H262', 'M283 1702H577'])}
        {wireSet('cluster', [
          'M178 1516H369V1566H374', 'M205 1516V1500H226', 'M270 1516V1556H276', 'M316 1516V1566H325', 'M727 1702H749V1565H760',
        ])}
        {wireSet('meander', ['M480 1566H498', 'M530 1566H544V1463H814', 'M599 1566H605V1484H814'])}
        <Wire d="M716 1711V1719" kind="meander" />
        {wireSet('pink', ['M178 1616H202', 'M311 1608H510V1585', 'M432 1608V1566H448'])}
        {wireSet('pinkFine', ['M311 1624H554V1565H567'])}
        {wireSet('error', [
          'M178 1581H230', 'M262 1581H276', 'M308 1582H325', 'M357 1582H374', 'M406 1582H448', 'M480 1582H498',
          'M530 1582H567', 'M599 1582H617', 'M625 1582H709', 'M717 1582H760', 'M792 1581H814',
          `M34 ${1886 + s}H58`, `M90 ${1887 + s}H117`,
        ])}
        {debug && (
          <>
            {wireSet('pinkThin', ['M272 1748H345', 'M465 1748H521', 'M771 1811H782V1818H851', 'M856 1748H894V1750H937'])}
            {wireSet('pink', ['M384 1624V1748.500H435'])}
            {wireSet('meander', ['M799 1463V1748.500H824'])}
            {wireSet('bool', ['M331 1766H336V1756H345', 'M507 1766H512V1756H521', 'M835 1827H851', 'M897 1766H902V1758H937'])}
            {wireSet('error', ['M377 1772H383V1778H514V1772H521', 'M553 1772H581V1843H851', 'M883 1843H907V1774H937'])}
          </>
        )}
        <Dot x={187} y={1430} c="#0000ff" />
        <Dot x={205} y={1516} c="#a0461a" />
        <Dot x={270} y={1516} c="#a0461a" />
        <Dot x={316} y={1516} c="#a0461a" />
        <Dot x={432} y={1608} c="#ff00ff" />

        <Prim x={202} y={1450}>≠0</Prim>
        <Prim x={344} y={1485}>×</Prim>
        <Prim x={370} y={1485}>+1</Prim>
        <Prim x={314} y={1490}>-1</Prim>
        <Prim x={262} y={1692}>÷</Prim>
        <polygon points="400,1445 428,1459 400,1473" fill="#ffffd8" stroke="#666" />
        <path d="M402 1451l9 8-9 8M411 1459h11" fill="none" stroke="#222" strokeWidth="1.4" />
        <text x="402" y="1461" fontFamily="Liberation Sans" fontSize="8" fontWeight="700">?</text>
        <text x="411" y="1454" fontFamily="Liberation Sans" fontSize="5.500">T</text>
        <text x="411" y="1468" fontFamily="Liberation Sans" fontSize="5.500">F</text>
        <polygon points="400,1447 403,1450 400,1453" fill="#ff0000" />
        <polygon points="448,1571 451,1573 448,1576" fill="#ff0000" />
        <polygon points="577,1700 580,1702 577,1705" fill="#ff0000" />
        <polygon points="814,1555 817,1557 814,1560" fill="#ff0000" />

        <path d="M345 1403L302 1464M142 1407L149 1417" fill="none" stroke="#111" strokeWidth="2.800" />
        <polygon points="299,1470 299,1460 307,1465" fill="#111" />
        <polygon points="153,1422 144,1418 152,1412" fill="#111" />
      </Wires>

      <Note $x={73} $y={1375} $w={111} $h={31}>{'0 if not configured in\nXML'}</Note>
      <Note $x={242} $y={1335} $w={252} $h={67}>
        {'AIM requires buffer IDs start at one, not zero.\nBuffer IDs are shared between all BIUs on a module.\nTesting shows 1-8191 are valid buffer IDs.\nBy default, use an offset of 2000 to use unique\nbuffer IDs for each BIU.'}
      </Note>

      <RightLabel end={142} y={1430}>starting buffer index</RightLabel>
      <RightLabel end={143} y={1516}>aim hardware parameters</RightLabel>
      <RightLabel end={143} y={1581}>error in</RightLabel>
      <RightLabel end={143} y={1617}>1553 configuration</RightLabel>
      <RightLabel end={144} y={1661}>logging enabled</RightLabel>
      <RightLabel end={144} y={1697}>minor frame period (us)</RightLabel>
      <DgLabel $x={847} $y={1458}>bc subaddress to buffer id map</DgLabel>
      <DgLabel $x={847} $y={1479}>rt subaddress to buffer id map</DgLabel>
      <DgLabel $x={847} $y={1552}>module reference</DgLabel>
      <DgLabel $x={847} $y={1576}>error out</DgLabel>

      <Terminal x={144} y={1422} c="#0000ff" text="U16" />
      <Terminal x={146} y={1508} c="#a0461a" glyph corner />
      <Terminal x={146} y={1572} c="#808000" glyph />
      <Terminal x={146} y={1608} c="#ff00ff" glyph corner />
      <Terminal x={147} y={1653} c="#007000" text="TF" />
      <Terminal x={146} y={1689} c="#ff8000" text="DBL" />
      <Terminal x={814} y={1455} c="#a0461a" text="O▸0" corner out thin />
      <Terminal x={814} y={1476} c="#a0461a" text="O▸0" corner out thin />
      <Terminal x={814} y={1549} c="#0000ff" text="U32" corner out thin />
      <Terminal x={814} y={1573} c="#808000" glyph out thin />

      <Constant $x={276} $y={1471} $w={31} $h={17} $c="#0000ff">2000</Constant>
      <Constant $x={207} $y={1709} $w={30} $h={16} $c="#ff8000">1000</Constant>
      <LibRing $x={170} $y={1536} $w={55} $h={17}><Blue>◂▸</Blue>LibInit<Blue>▼</Blue></LibRing>

      <Unbundle $x={226} $y={1492} $w={76} $h={17}>
        <UnbundleGrip $w={16}><BlockArrow /></UnbundleGrip>
        <UnbundleRows><UnbundleRow $c="#0000ff">biu number</UnbundleRow></UnbundleRows>
      </Unbundle>
      <Unbundle $x={202} $y={1600} $w={109} $h={32}>
        <UnbundleGrip $w={16}><BlockArrow /></UnbundleGrip>
        <UnbundleRows>
          <UnbundleRow $c="#ff00ff">Bus Controller</UnbundleRow>
          <UnbundleRow $c="#ff00ff">Remote Terminals</UnbundleRow>
        </UnbundleRows>
      </Unbundle>
      <Unbundle $x={577} $y={1694} $w={151} $h={17}>
        <BundleText>Minor Frame Time (1 msec)</BundleText>
        <BundleCell $w={8} />
        <BundleCell $w={9}><BlockArrow /></BundleCell>
      </Unbundle>
      <XferIcon x={681} y={1719} />

      <SubVI x={230} y={1552} lines={['LIB', 'MGR', '1553']} />
      <SubVI x={276} y={1552} lines={['INIT', '1553', 'MODULE']} />
      <SubVI x={325} y={1553} lines={['SET', '1553', 'COUPLE']} />
      <SubVI x={374} y={1553} lines={['INIT', 'TIMING', 'SOURCE']} />
      <SubVI x={448} y={1553} sr lines={['INIT', 'BC']} />
      <SubVI x={498} y={1553} sr tight lines={['INIT', 'ACYC', 'FRAMES']} />
      <SubVI x={567} y={1553} sr lines={['INIT', 'RTs']} />
      <SubVI x={760} y={1553} lines={['START', 'ALL']} />
      <SubVI x={58} y={1859 + s} lines={['INIT', 'BUS', 'MON']} />

      {debug && (
        <>
          <TextConstant $x={164} $y={1743} $w={108} $h={16} $c="#ff00ff">$$$Remote Terminals</TextConstant>
          <TextConstant $x={602} $y={1803} $w={169} $h={17} $c="#ff00ff">$$$Rt subaddress to buffer id map</TextConstant>
          <BoolConst $x={316} $y={1759} />
          <BoolConst $x={492} $y={1759} />
          <BoolConst $x={819} $y={1820} />
          <BoolConst $x={882} $y={1760} />
          <DebugIcon x={345} y={1744} />
          <DebugIcon x={521} y={1744} />
          <DebugIcon x={851} y={1815} />
          <DebugIcon x={937} y={1746} />
          <FlattenIcon x={435} y={1736} />
          <FlattenIcon x={824} y={1736} />
        </>
      )}
    </Canvas>
  )
}

/* ---------- differences text ---------- */

const FALSE_AT = ['(-275,434)', '(-99,434)', '(229,495)', '(291,434)']
const changeBlock = [
  [1, 'Added'],
  ...FALSE_AT.map(at => [2, `False Constant Add to log file? (F) Added at ${at}`]),
  [2, 'Flatten To XML  Added at (-156,411)'],
  [2, 'Flatten To XML  Added at (234,411)'],
  [2, 'String Constant Message Added at (-427,417)'],
  [2, 'String Constant Message Added at (11,478)'],
  ...['(-245,419)', '(-69,419)', '(261,490)', '(347,421)'].map(at => [
    2,
    `SubVI Custom Device Utility Library.lvlib:NI VeriStand - Print Debug Line.vi Added at ${at}`,
  ]),
  [1, 'attached object'],
  [1, 'wiring changes'],
]
const DIFF_LINES = [
  [0, 'Differences:'],
  [0, 'Front Panel Functional Changes'],
  [1, 'None'],
  [0, ''],
  [0, 'Front Panel Cosmetic Changes'],
  [1, 'None'],
  [0, ''],
  [0, 'Block Diagram Functional Changes'],
  ...changeBlock,
  [0, ''],
  [0, 'Block Diagram Cosmetic Changes'],
  ...changeBlock,
  [0, ''],
  [0, 'Attribute Changes'],
  [1, 'None'],
]
const DiffList = styled.div`
  margin-top: 1px;
`
const DiffLine = styled.div`
  height: 17px;
  padding-left: ${p => p.$level * 15}px;
  font: 400 13px/17px Lato, sans-serif;
  letter-spacing: -0.15px;
  white-space: pre;
  color: #1a1a1a;
`

const ColumnView = ({ name, debug, trueShift }) => (
  <Column>
    <Title $top={27}>{`AIM MIL-STD-1553 Engine.lvlib:Implementation.lvlib:Shared Resources.lvclass:${name} Front Panel`}</Title>
    <FrontPanel />
    <Title $top={53}>{`AIM MIL-STD-1553 Engine.lvlib:Implementation.lvlib:Shared Resources.lvclass:${name} Connector Pane`}</Title>
    <ConnectorPane />
    <Title $top={0}>{`AIM MIL-STD-1553 Engine.lvlib:Implementation.lvlib:Shared Resources.lvclass:${name} Block Diagram`}</Title>
    <BlockDiagram debug={debug} trueShift={trueShift} />
  </Column>
)

export default function App() {
  return (
    <Page>
      <GlobalStyle />
      <Columns>
        <ColumnView name="  COPY  Initialize Hardware.vi" trueShift={0} />
        <ColumnView name="Initialize Hardware.vi" debug trueShift={90} />
      </Columns>
      <DiffList>
        {DIFF_LINES.map(([level, text], i) => (
          <DiffLine key={i} $level={level}>{text}</DiffLine>
        ))}
      </DiffList>
    </Page>
  )
}
